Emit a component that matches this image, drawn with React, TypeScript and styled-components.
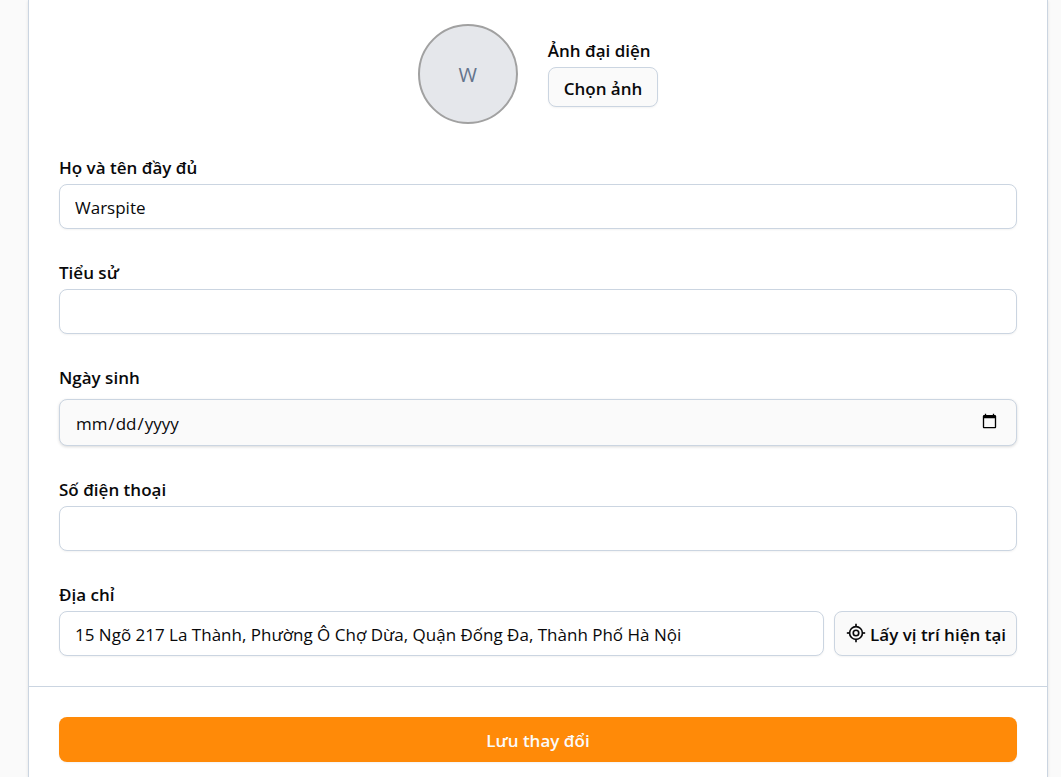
import React, { useState } from "react";
import styled, { createGlobalStyle, css } from "styled-components";
import { LocateFixed } from "lucide-react";

const GlobalStyle = createGlobalStyle`
  *, *::before, *::after { box-sizing: border-box; }
  body {
    margin: 0;
    background: #fafafa;
    color: #09090b;
    font: 400 17px/25px "Segoe UI", "Open Sans", "Noto Sans", sans-serif;
  }
  button, input { font: inherit; color: inherit; }
`;

const Page = styled.main`
  padding: 0 13px 0 28px;
`;

const Card = styled.form`
  background: #fff;
  border: solid #cbd5e1;
  border-width: 0 1px;
  box-shadow: 0 1px 3px rgba(0, 0, 0, 0.1);
`;

const Fields = styled.div`
  display: flex;
  flex-direction: column;
  gap: 30px;
  padding: 24px 30px 30px;
`;

const AvatarRow = styled.div`
  display: flex;
  justify-content: center;
  align-items: center;
  gap: 30px;
`;

const Avatar = styled.div`
  display: grid;
  place-items: center;
  width: 100px;
  height: 100px;
  border: 2px solid #a1a1a1;
  border-radius: 50%;
  background: #e5e7eb;
  color: #64748b;
  font-size: 20px;
`;

const Picker = styled.div`
  display: flex;
  flex-direction: column;
  align-items: flex-start;
  gap: 5px;
  padding-bottom: 4px;
`;

const Field = styled.div<{ $gap?: number }>`
  display: flex;
  flex-direction: column;
  gap: ${({ $gap = 5 }) => $gap}px;
`;

const labelText = css`
  font-size: 17px;
  font-weight: 600;
`;

const Label = styled.label`
  ${labelText}
  padding-top: 3px;
  line-height: 22px;
`;

const control = css`
  border: 1px solid #cbd5e1;
  border-radius: 8px;
  box-shadow: 0 1px 2px rgba(0, 0, 0, 0.05);
`;

const TextInput = styled.input`
  ${control}
  flex: 1 0 auto;
  width: 100%;
  min-width: 0;
  height: 45px;
  padding: 2px 15px 0;
  background: #fff;
`;

const DateInput = styled.input`
  ${control}
  width: 100%;
  height: 47px;
  padding: 2px 16px 0 15px;
  background: #fafafa;
  box-shadow: 0 1px 3px rgba(0, 0, 0, 0.15);

  &::-webkit-calendar-picker-indicator {
    margin-bottom: 4px;
  }
`;

const AddressRow = styled.div`
  display: flex;
  gap: 10px;

  ${TextInput} { flex: 1 1 0; }
`;

const OutlineButton = styled.button<{ $height: number; $pad: number }>`
  ${control}
  ${labelText}
  display: flex;
  align-items: center;
  gap: 3px;
  height: ${({ $height }) => $height}px;
  padding: 2px ${({ $pad }) => $pad}px 0;
  background: #fafafa;
  white-space: nowrap;

  svg { margin-bottom: 3px; }
`;

const Footer = styled.footer`
  padding: 30px 30px 15px;
  border-top: 1px solid #cbd5e1;
`;

const SaveButton = styled.button`
  ${labelText}
  width: 100%;
  height: 45px;
  padding: 2px 15px 0;
  border: 0;
  border-radius: 8px;
  background: #ff8a08;
  color: #fafafa;
  box-shadow: 0 1px 2px rgba(0, 0, 0, 0.05);
`;

export default function App() {
  const [name, setName] = useState("Warspite");
  const [address, setAddress] = useState(
    "15 Ngõ 217 La Thành, Phường Ô Chợ Dừa, Quận Đống Đa, Thành Phố Hà Nội"
  );

  return (
    <>
      <GlobalStyle />
      <Page>
        <Card onSubmit={(e) => e.preventDefault()}>
          <Fields>
            <AvatarRow>
              <Avatar>W</Avatar>
              <Picker>
                <Label htmlFor="avatar">Ảnh đại diện</Label>
                <OutlineButton id="avatar" type="button" $height={40} $pad={15}>
                  Chọn ảnh
                </OutlineButton>
              </Picker>
            </AvatarRow>
            <Field>
              <Label htmlFor="name">Họ và tên đầy đủ</Label>
              <TextInput id="name" value={name} onChange={(e) => setName(e.target.value)} />
            </Field>
            <Field>
              <Label htmlFor="bio">Tiểu sử</Label>
              <TextInput id="bio" />
            </Field>
            <Field $gap={10}>
              <Label htmlFor="birthday">Ngày sinh</Label>
              <DateInput id="birthday" type="date" />
            </Field>
            <Field>
              <Label htmlFor="phone">Số điện thoại</Label>
              <TextInput id="phone" type="tel" />
            </Field>
            <Field>
              <Label htmlFor="address">Địa chỉ</Label>
              <AddressRow>
                <TextInput
                  id="address"
                  value={address}
                  onChange={(e) => setAddress(e.target.value)}
                />
                <OutlineButton type="button" $height={45} $pad={10}>
                  <LocateFixed size={22} strokeWidth={1.8} strokeLinecap="butt" aria-hidden />
                  Lấy vị trí hiện tại
                </OutlineButton>
              </AddressRow>
            </Field>
          </Fields>
          <Footer>
            <SaveButton type="submit">Lưu thay đổi</SaveButton>
          </Footer>
        </Card>
      </Page>
    </>
  );
}
